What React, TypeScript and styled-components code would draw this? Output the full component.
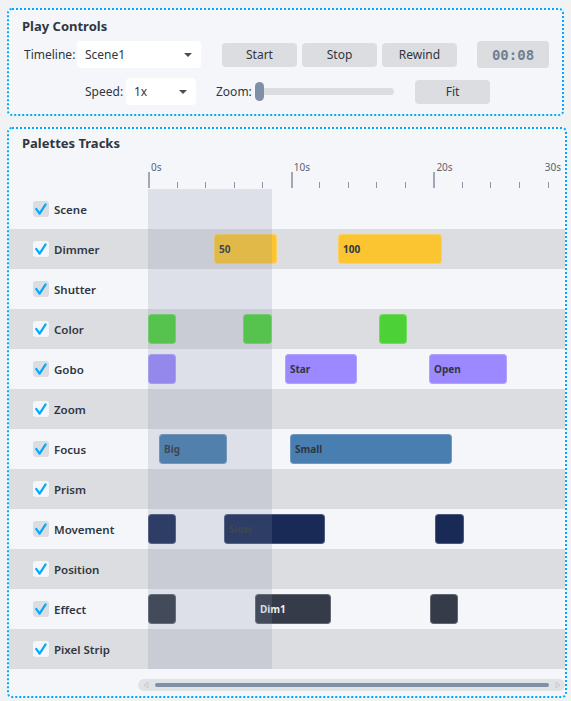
import styled, { createGlobalStyle } from "styled-components"

const GlobalStyle = createGlobalStyle`
  body {
    margin: 0;
    background: #f1f2f4;
    font-family: "Noto Sans", "Open Sans", sans-serif;
    color: #2f3640;
  }
`

const Page = styled.div`
  display: flex;
  flex-direction: column;
  gap: 11px;
  padding: 8px 0 0 7px;
`

const Panel = styled.section<{ $width: number }>`
  box-sizing: border-box;
  width: ${(p) => p.$width}px;
  background: #f5f6fa;
  border: 2px dotted #00a8ff;
  border-radius: 5px;
  overflow: hidden;
`

const Title = styled.h2`
  margin: 0;
  font-size: 13px;
  font-weight: 700;
  line-height: 18px;
  color: #2f3640;
`

// ---------- play controls ----------

const Controls = styled.div`
  padding: 7px 13px 9px 15px;
  display: flex;
  flex-direction: column;
`

const ControlsTitle = styled(Title)`
  margin-left: -2px;
`

const ControlRow = styled.div<{ $indent?: number }>`
  display: flex;
  align-items: center;
  height: 27px;
  padding-left: ${(p) => p.$indent || 0}px;
`

const Field = styled.div<{ $gap: number; $after: number }>`
  display: flex;
  align-items: center;
  gap: ${(p) => p.$gap}px;
  margin-right: ${(p) => p.$after}px;
`

const Label = styled.span<{ $width: number }>`
  width: ${(p) => p.$width}px;
  font-size: 12px;
  color: #2f3640;
  white-space: nowrap;
`

const Select = styled.div<{ $width: number }>`
  box-sizing: border-box;
  width: ${(p) => p.$width}px;
  height: 27px;
  padding: 0 9px 0 8px;
  display: flex;
  align-items: center;
  justify-content: space-between;
  background: #ffffff;
  border-radius: 4px;
  font-size: 12px;
  color: #2f3640;
`

const Caret = styled.span`
  width: 0;
  height: 0;
  border-left: 4px solid transparent;
  border-right: 4px solid transparent;
  border-top: 4px solid #4a4f57;
`

const ButtonGroup = styled.div`
  display: flex;
  gap: 5px;
  margin-right: 20px;
`

const Button = styled.button`
  width: 75px;
  height: 24px;
  padding: 0;
  border: none;
  border-radius: 4px;
  background: #dcdde1;
  font-family: inherit;
  font-size: 12px;
  color: #2f3640;
  cursor: pointer;
`

const Timer = styled.div`
  width: 74px;
  height: 27px;
  display: flex;
  align-items: center;
  justify-content: center;
  background: #dcdde1;
  border-radius: 4px;
  font-family: "DejaVu Sans Mono", "Liberation Mono", monospace;
  font-weight: 700;
  font-size: 14px;
  color: #718093;
`

const Slider = styled.div`
  position: relative;
  width: 139px;
  height: 7px;
  border-radius: 4px;
  background: #dcdde1;
`

const Thumb = styled.span`
  position: absolute;
  left: 0;
  top: -6px;
  width: 9px;
  height: 19px;
  border-radius: 5px;
  background: #7f8fa6;
`

// ---------- tracks ----------

const TracksTitle = styled(Title)`
  padding: 5px 13px 0;
`

const Ruler = styled.div`
  display: grid;
  grid-template-columns: 139px 1fr;
  height: 37px;
`

const RulerLane = styled.div`
  position: relative;
  overflow: hidden;
`

const Tick = styled.span<{ $major: boolean }>`
  position: absolute;
  bottom: 1px;
  width: ${(p) => (p.$major ? 2 : 1)}px;
  height: ${(p) => (p.$major ? 16 : 6)}px;
  background: ${(p) => (p.$major ? "#a0a8b5" : "#8995a8")};
`

const TickLabel = styled.span<{ $end?: boolean }>`
  position: absolute;
  top: 10px;
  ${(p) => (p.$end ? "right: 4px;" : "")}
  font-size: 10px;
  line-height: 11px;
  color: #5c6370;
`

const TrackBody = styled.div`
  position: relative;
`

const Row = styled.div<{ $alt: boolean }>`
  display: grid;
  grid-template-columns: 139px 1fr;
  height: 40px;
  background: ${(p) => (p.$alt ? "#dcdde1" : "#f5f6fa")};
`

const TrackName = styled.label`
  display: flex;
  align-items: center;
  gap: 5px;
  padding-left: 24px;
  font-size: 11.5px;
  font-weight: 600;
  color: #2f3640;
`

const Check = styled.span<{ $alt: boolean }>`
  width: 16px;
  height: 16px;
  border-radius: 3px;
  background: ${(p) => (p.$alt ? "#f5f6fa" : "#dcdde1")};
  display: flex;
`

const Lane = styled.div`
  position: relative;
  overflow: hidden;
`

const Clip = styled.div<{ $color: string; $text: string }>`
  position: absolute;
  top: 5px;
  height: 30px;
  box-sizing: border-box;
  padding-left: 5px;
  display: flex;
  align-items: center;
  border-radius: 4px;
  background: ${(p) => p.$color};
  box-shadow: inset 0 0 0 1px rgba(255, 255, 255, 0.22);
  font-size: 10px;
  font-weight: 700;
  color: ${(p) => p.$text};
`

const Playhead = styled.div`
  position: absolute;
  top: 0;
  bottom: 0;
  left: 139px;
  width: 124px;
  background: rgba(125, 141, 165, 0.2);
  pointer-events: none;
`

const Scrollbar = styled.div`
  margin: 10px 0 5px 129px;
  height: 12px;
  border-radius: 6px;
  background: #e1e2e6;
  display: flex;
  align-items: center;
  gap: 6px;
  padding: 0 4px 0 5px;
`

const ScrollThumb = styled.div`
  flex: 1;
  height: 4px;
  border-radius: 2px;
  background: #7f8fa6;
`

type Clip = { start: number; width: number; label?: string }
type Track = { name: string; color: string; text: string; clips: Clip[] }

const tracks: Track[] = [
  { name: "Scene", color: "", text: "", clips: [] },
  {
    name: "Dimmer",
    color: "#fbc531",
    text: "#2f3640",
    clips: [
      { start: 66, width: 63, label: "50" },
      { start: 190, width: 104, label: "100" },
    ],
  },
  { name: "Shutter", color: "", text: "", clips: [] },
  {
    name: "Color",
    color: "#4cd137",
    text: "#2f3640",
    clips: [
      { start: 0, width: 28 },
      { start: 95, width: 29 },
      { start: 231, width: 28 },
    ],
  },
  {
    name: "Gobo",
    color: "#9c88ff",
    text: "#2f3640",
    clips: [
      { start: 0, width: 28 },
      { start: 137, width: 72, label: "Star" },
      { start: 281, width: 78, label: "Open" },
    ],
  },
  { name: "Zoom", color: "", text: "", clips: [] },
  {
    name: "Focus",
    color: "#487eb0",
    text: "#2f3640",
    clips: [
      { start: 11, width: 68, label: "Big" },
      { start: 142, width: 162, label: "Small" },
    ],
  },
  { name: "Prism", color: "", text: "", clips: [] },
  {
    name: "Movement",
    color: "#192a56",
    text: "#2f3640",
    clips: [
      { start: 0, width: 28 },
      { start: 76, width: 101, label: "Slow" },
      { start: 287, width: 29 },
    ],
  },
  { name: "Position", color: "", text: "", clips: [] },
  {
    name: "Effect",
    color: "#353b48",
    text: "#eef0f4",
    clips: [
      { start: 0, width: 28 },
      { start: 107, width: 76, label: "Dim1" },
      { start: 282, width: 28 },
    ],
  },
  { name: "Pixel Strip", color: "", text: "", clips: [] },
]

const PX_PER_SEC = 14.27
const seconds = Array.from({ length: 15 }, (_, i) => i * 2)

function CheckMark() {
  return (
    <svg width="16" height="16" viewBox="0 0 16 16">
      <path d="M3.2 7.8 L6.6 12.6 L12.6 3.4" fill="none" stroke="#00a8ff" strokeWidth="2.2" strokeLinecap="round" strokeLinejoin="round" />
    </svg>
  )
}

function Arrow({ dir }: { dir: "left" | "right" }) {
  const d = dir === "left" ? "M5 1 L1 4 L5 7 Z" : "M1 1 L5 4 L1 7 Z"
  return (
    <svg width="6" height="8" viewBox="0 0 6 8">
      <path d={d} fill="none" stroke="#c4c8cf" strokeWidth="1" strokeLinejoin="round" />
    </svg>
  )
}

export default function App() {
  return (
    <>
      <GlobalStyle />
      <Page>
        <Panel $width={557}>
          <Controls>
            <ControlsTitle>Play Controls</ControlsTitle>
            <ControlRow style={{ marginTop: 6 }}>
              <Field $gap={6} $after={21}>
                <Label $width={47}>Timeline:</Label>
                <Select $width={124}>
                  Scene1
                  <Caret />
                </Select>
              </Field>
              <ButtonGroup>
                <Button>Start</Button>
                <Button>Stop</Button>
                <Button>Rewind</Button>
              </ButtonGroup>
              <Timer>00:08</Timer>
            </ControlRow>
            <ControlRow $indent={61} style={{ marginTop: 10 }}>
              <Field $gap={6} $after={20}>
                <Label $width={35}>Speed:</Label>
                <Select $width={70}>
                  1x
                  <Caret />
                </Select>
              </Field>
              <Field $gap={5} $after={21}>
                <Label $width={34}>Zoom:</Label>
                <Slider>
                  <Thumb />
                </Slider>
              </Field>
              <Button>Fit</Button>
            </ControlRow>
          </Controls>
        </Panel>

        <Panel $width={560}>
          <TracksTitle>Palettes Tracks</TracksTitle>
          <Ruler>
            <div />
            <RulerLane>
              {seconds.map((s) => (
                <Tick key={s} $major={s % 10 === 0} style={{ left: s * PX_PER_SEC }} />
              ))}
              {[0, 10, 20].map((s) => (
                <TickLabel key={s} style={{ left: s * PX_PER_SEC + 3 }}>
                  {s}s
                </TickLabel>
              ))}
              <TickLabel $end>30s</TickLabel>
            </RulerLane>
          </Ruler>
          <TrackBody>
            {tracks.map((t, i) => {
              const alt = i % 2 === 1
              return (
                <Row key={t.name} $alt={alt}>
                  <TrackName>
                    <Check $alt={alt}>
                      <CheckMark />
                    </Check>
                    {t.name}
                  </TrackName>
                  <Lane>
                    {t.clips.map((c) => (
                      <Clip
                        key={c.start}
                        $color={t.color}
                        $text={t.text}
                        style={{ left: c.start, width: c.width }}
                      >
                        {c.label}
                      </Clip>
                    ))}
                  </Lane>
                </Row>
              )
            })}
            <Playhead />
          </TrackBody>
          <Scrollbar>
            <Arrow dir="left" />
            <ScrollThumb />
            <Arrow dir="right" />
          </Scrollbar>
        </Panel>
      </Page>
    </>
  )
}
